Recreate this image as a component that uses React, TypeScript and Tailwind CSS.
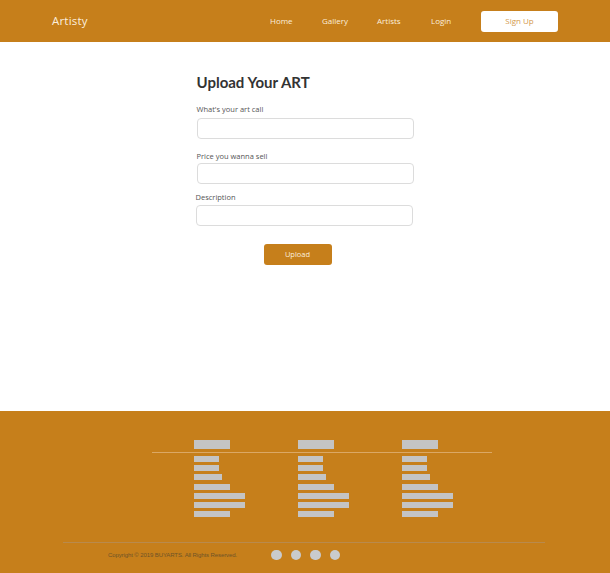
import React from "react";

const rowWidths = [25, 25, 28, 36, 51, 51, 36];

export default function App() {
  const cols = [0, 1, 2];
  return (
    <div className="min-h-[573px] w-full flex flex-col bg-white" style={{ fontFamily: '"Open Sans", "Liberation Sans", sans-serif' }}>
      {/* Header */}
      <header className="h-[42px] bg-[#c67f1b] flex items-center shrink-0">
        <div className="ml-[52px] text-[11.5px] text-[#fbeedd] tracking-[0.2px]">Artisty</div>
        <nav className="ml-auto flex items-center text-[8px] text-[#fbeedd]">
          <span className="w-[52px]">Home</span>
          <span className="w-[55px]">Gallery</span>
          <span className="w-[54px]">Artists</span>
          <span className="w-[50px]">Login</span>
        </nav>
        <button className="mr-[52px] w-[77px] h-[21px] bg-white rounded-[3px] text-[8px] text-[#d49a4e] flex items-center justify-center">
          Sign Up
        </button>
      </header>

      {/* Main */}
      <main className="h-[369px] shrink-0 flex justify-center">
        <div className="w-[217px] pt-[30px]">
          <h1 className="text-[15px] font-bold text-[#333] leading-[20px]" style={{ fontFamily: 'Lato, "Open Sans", sans-serif' }}>Upload Your ART</h1>
          <label className="block mt-[12px] text-[7.5px] text-[#555] leading-[10px]">What's your art call</label>
          <input className="block mt-[4px] w-[217px] h-[21px] border border-[#dcdcdc] rounded-[4px] bg-white" />
          <label className="block mt-[12px] text-[7.5px] text-[#555] leading-[10px]">Price you wanna sell</label>
          <input className="block mt-[2px] w-[217px] h-[21px] border border-[#dcdcdc] rounded-[4px] bg-white" />
          <label className="block mt-[8px] -ml-px text-[7.5px] text-[#555] leading-[10px]">Description</label>
          <input className="block mt-[3px] -ml-px w-[217px] h-[21px] border border-[#dcdcdc] rounded-[4px] bg-white" />
          <button className="block mt-[18px] ml-[67px] w-[68px] h-[21px] bg-[#c67f1b] rounded-[3px] text-[7.5px] text-[#fbeedd]">
            Upload
          </button>
        </div>
      </main>

      {/* Footer */}
      <footer className="h-[162px] shrink-0 bg-[#c67f1b] flex flex-col">
        <div className="ml-[152px] w-[340px] mt-[29px]">
          <div className="flex pl-[42px]">
            {cols.map((c) => (
              <div key={c} className="w-[104px] shrink-0">
                <div className="w-[36px] h-[9px] bg-[#c4c4c4]" />
              </div>
            ))}
          </div>
          <div className="mt-[3px] h-px bg-[#dba865]" />
          <div className="flex pl-[42px] mt-[3px]">
            {cols.map((c) => (
              <div key={c} className="w-[104px] shrink-0 flex flex-col gap-[3.2px]">
                {rowWidths.map((w, i) => (
                  <div key={i} className="h-[6px] bg-[#c4c4c4]" style={{ width: w }} />
                ))}
              </div>
            ))}
          </div>
        </div>
        <div className="ml-[63px] w-[482px] mt-[25px] h-px bg-[#b98a4c]" />
        <div className="flex items-center mt-[6px] h-[12px]">
          <span className="ml-[108px] w-[163px] text-[6px] text-[#6f5428] tracking-[-0.1px]" style={{ fontFamily: '"Liberation Sans", sans-serif' }}>
            Copyright © 2019 BUYARTS. All Rights Reserved.
          </span>
          <div className="flex gap-[9px]">
            {[0, 1, 2, 3].map((i) => (
              <div key={i} className="w-[10.5px] h-[10.5px] rounded-full bg-[#c9cbcd]" />
            ))}
          </div>
        </div>
      </footer>
    </div>
  );
}
